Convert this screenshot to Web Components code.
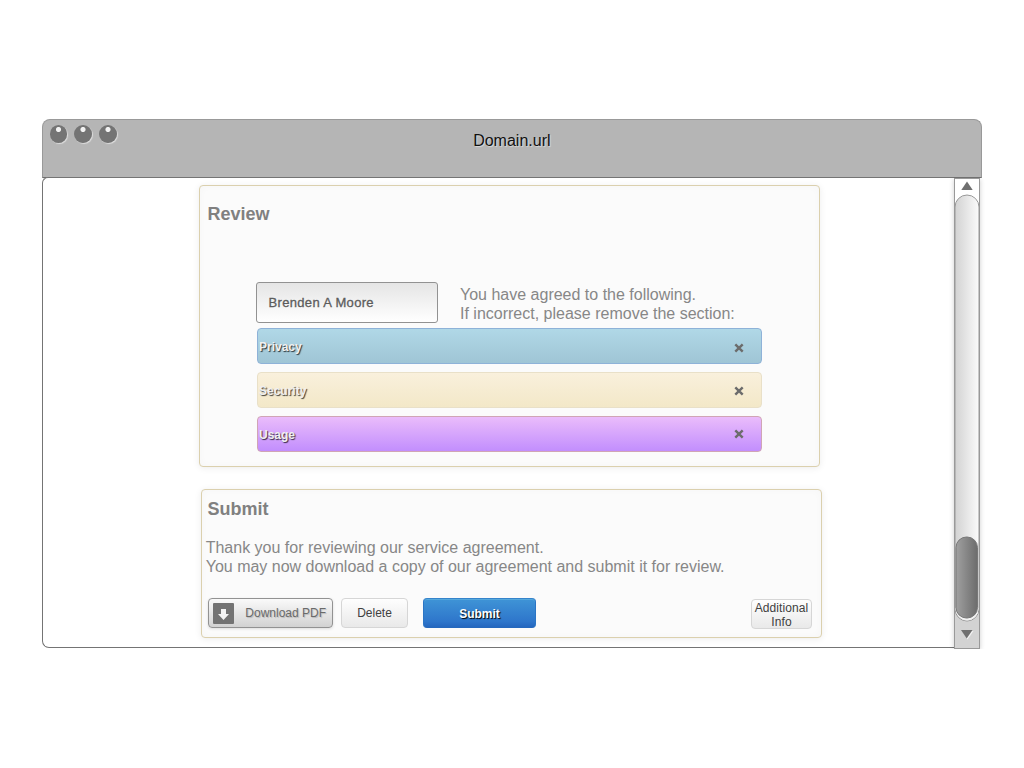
<!DOCTYPE html>
<html lang="en">
<head>
<meta charset="utf-8">
<title>Domain.url</title>
<style>
    body {
        margin: 0;
        background: #fff;
        font-family: "Liberation Sans", Arial, sans-serif;
    }
    .privacy {
        --top: #b0d8e7;
        --bottom: #9fc5d5;
        --edge: #8eb2d8;
    }
    .security {
        --top: #f9f0dc;
        --bottom: #f3e8c8;
        --edge: #e9e0c8;
    }
    .usage {
        --top: #eabcfb;
        --bottom: #c28efd;
        --edge: #d0a5b5;
    }
    .sections {
        display: flex;
        flex-direction: column;
        gap: 8px;
        margin: 5px 57px 0;
    }
    .intro {
        display: flex;
        gap: 22px;
        margin: 57px 0 0 56px;
    }
    .actions {
        display: flex;
        align-items: flex-start;
        margin: 22px 9px 0 6px;
    }
</style>
</head>
<body>
<browser-window address="Domain.url">
    <panel-card heading="Review" style="--height: 282px; --left: 156px; --pad: 17px; --indent: 7.5px">
        <div class="intro">
            <name-field value="Brenden A Moore"></name-field>
            <text-lines style="--offset: 3px">You have agreed to the following.<br>If incorrect, please remove the section:</text-lines>
        </div>
        <div class="sections">
            <section-bar class="privacy" style="--shift: 2px">Privacy</section-bar>
            <section-bar class="security">Security</section-bar>
            <section-bar class="usage" style="--shift: -1px">Usage</section-bar>
        </div>
    </panel-card>
    <panel-card heading="Submit" style="--height: 149px; --left: 158px; --pad: 8px; --indent: 5.5px">
        <text-lines style="margin: 18px 0 0 3.7px">Thank you for reviewing our service agreement.<br>You may now download a copy of our agreement and submit it for review.</text-lines>
        <div class="actions">
            <push-button kind="download" style="width: 125px">Download PDF</push-button>
            <push-button style="width: 67px; margin-left: 8px">Delete</push-button>
            <push-button kind="primary" style="width: 113px; margin-left: 15px">Submit</push-button>
            <push-button style="width: 61px; margin: 1px 0 0 auto; padding-top: 2px; letter-spacing: .1px">Additional<br>Info</push-button>
        </div>
    </panel-card>
</browser-window>

<script>
class BrowserWindow extends HTMLElement {
    constructor() {
        super();
        this.attachShadow({ mode: 'open' });

        this.shadowRoot.innerHTML = `
            <style>
                :host {
                    display: block;
                    width: 940px;
                    margin: 119px 0 0 42px;
                }
                header {
                    box-sizing: border-box;
                    height: 59px;
                    display: grid;
                    grid-template-columns: 1fr auto 1fr;
                    padding: 4.5px 7px 0 6.7px;
                    border: 1px solid #999;
                    border-bottom-color: #707070;
                    border-radius: 8px 8px 0 0;
                    background: #b5b5b5;
                }
                .dots {
                    display: flex;
                    gap: 7px;
                }
                .dots i {
                    width: 17.7px;
                    height: 18px;
                    border-radius: 50%;
                    background: radial-gradient(circle at 50% 25%, #f2f2f2 0 2.1px, #747474 3px);
                    box-shadow: 1px 1px 1px rgba(255, 255, 255, .55);
                }
                .address {
                    padding-top: 6.5px;
                    font-size: 16px;
                    line-height: 19px;
                    color: #111;
                    text-shadow: 1px 1px 1px rgba(255, 255, 255, .5);
                }
                main {
                    display: flex;
                    align-items: flex-start;
                    margin-top: -1px;
                }
                .page {
                    box-sizing: border-box;
                    width: 912px;
                    height: 471px;
                    display: flex;
                    flex-direction: column;
                    gap: 22px;
                    padding-top: 7px;
                    background: #fff;
                    border: 1px solid #747474;
                    border-right: 0;
                    border-radius: 6px 0 0 7px;
                }
            </style>
            <header>
                <div class="dots"><i></i><i></i><i></i></div>
                <div class="address"></div>
            </header>
            <main>
                <div class="page"><slot></slot></div>
                <scroll-bar></scroll-bar>
            </main>
        `;
    }

    connectedCallback() {
        this.shadowRoot.querySelector('.address').textContent = this.getAttribute('address');
    }
}

class ScrollBar extends HTMLElement {
    constructor() {
        super();
        this.attachShadow({ mode: 'open' });

        this.shadowRoot.innerHTML = `
            <style>
                :host {
                    display: block;
                    width: 26px;
                    height: 471px;
                    margin-top: 1px;
                    box-shadow: 0 1px 5px rgba(0, 0, 0, .2);
                    clip-path: inset(0 -6px -6px -6px);
                }
                svg {
                    display: block;
                }
            </style>
            <svg width="26" height="471" viewBox="0 0 26 471">
                <defs>
                    <linearGradient id="track">
                        <stop offset="0" stop-color="#d2d2d2"/>
                        <stop offset="1" stop-color="#fbfbfb"/>
                    </linearGradient>
                    <linearGradient id="thumb">
                        <stop offset="0" stop-color="#a0a0a0"/>
                        <stop offset="1" stop-color="#6c6c6c"/>
                    </linearGradient>
                </defs>
                <rect x=".5" y=".5" width="25" height="470" fill="#fff"/>
                <rect x="1" y="400" width="24" height="70" fill="#d3d3d3"/>
                <rect x="1" y="17" width="24" height="426" rx="12" fill="url(#track)" stroke="#999"/>
                <path d="M2.500 430a10.500 11.500 0 0 0 21 0" fill="none" stroke="#f2f2f2" stroke-width="2"/>
                <rect x="2" y="359" width="21.5" height="81" rx="10.5" fill="url(#thumb)" stroke="#777"/>
                <rect x=".5" y=".5" width="25" height="470" fill="none" stroke="#999"/>
                <path d="M13 3.500L18.700 12H7.300z" fill="#6f6f6f"/>
                <path d="M8 453H19.500L13.500 461.500z" fill="#f2f2f2"/>
                <path d="M7 452H18.500L12.700 460.500z" fill="#707070"/>
            </svg>
        `;
    }
}

class PanelCard extends HTMLElement {
    constructor() {
        super();
        this.attachShadow({ mode: 'open' });

        this.shadowRoot.innerHTML = `
            <style>
                :host {
                    display: block;
                    box-sizing: border-box;
                    width: 621px;
                    height: var(--height);
                    margin-left: var(--left);
                    border: 1px solid #dbd0ae;
                    border-radius: 4px;
                    background: #fbfbfb;
                    box-shadow: 0 1px 7px rgba(0, 0, 0, .08), inset 0 0 8px rgba(0, 0, 0, .025);
                }
                h2 {
                    margin: 0;
                    padding: var(--pad) 0 0 var(--indent);
                    font-size: 18px;
                    line-height: 22px;
                    color: #808080;
                }
            </style>
            <h2></h2>
            <slot></slot>
        `;
    }

    connectedCallback() {
        this.shadowRoot.querySelector('h2').textContent = this.getAttribute('heading');
    }
}

class NameField extends HTMLElement {
    constructor() {
        super();
        this.attachShadow({ mode: 'open' });

        this.shadowRoot.innerHTML = `
            <style>
                :host {
                    display: flex;
                    align-items: center;
                    box-sizing: border-box;
                    width: 182px;
                    height: 41px;
                    padding-left: 11.5px;
                    border: 1px solid #929292;
                    border-radius: 3px;
                    background: linear-gradient(#e5e5e5, #fff);
                    font-size: 13px;
                    letter-spacing: .33px;
                    color: #5c5c5c;
                    -webkit-text-stroke: .3px #5c5c5c;
                }
            </style>
            <span></span>
        `;
    }

    connectedCallback() {
        this.shadowRoot.querySelector('span').textContent = this.getAttribute('value');
    }
}

class TextLines extends HTMLElement {
    constructor() {
        super();
        this.attachShadow({ mode: 'open' });

        this.shadowRoot.innerHTML = `
            <style>
                :host {
                    display: block;
                    padding-top: var(--offset, 0);
                    font-size: 16px;
                    line-height: 19px;
                    white-space: nowrap;
                    color: #878787;
                }
            </style>
            <slot></slot>
        `;
    }
}

class SectionBar extends HTMLElement {
    constructor() {
        super();
        this.attachShadow({ mode: 'open' });

        this.shadowRoot.innerHTML = `
            <style>
                :host {
                    display: flex;
                    align-items: center;
                    justify-content: space-between;
                    box-sizing: border-box;
                    width: 505px;
                    height: 36px;
                    padding: 1px 17px 0 1px;
                    border: 1px solid var(--edge);
                    border-radius: 4px;
                    background: linear-gradient(var(--top), var(--bottom));
                    font-size: 12px;
                    font-weight: bold;
                    color: #f0f0f0;
                    text-shadow: 1px 1px 1px rgba(0, 0, 0, .75);
                }
                svg {
                    margin-top: var(--shift, 0);
                }
            </style>
            <slot></slot>
            <svg width="10" height="10" viewBox="0 0 10 10">
                <path d="M1.300 1.300L8.700 8.700M8.700 1.300L1.300 8.700" stroke="#6c6c6c" stroke-width="2.400"/>
            </svg>
        `;
    }
}

class PushButton extends HTMLElement {
    constructor() {
        super();
        this.attachShadow({ mode: 'open' });

        this.shadowRoot.innerHTML = `
            <style>
                :host {
                    display: flex;
                    align-items: center;
                    justify-content: center;
                    box-sizing: border-box;
                    height: 30px;
                    border: 1px solid #d6d6d6;
                    border-radius: 4px;
                    background: linear-gradient(#fefefe, #e9e9e9);
                    font-size: 12px;
                    line-height: 14px;
                    text-align: center;
                    color: #404040;
                }
                :host([kind="download"]) {
                    justify-content: space-between;
                    padding: 0 6px 0 4px;
                    border-color: #929292;
                    background: linear-gradient(#fafafa, #d2d2d2);
                    box-shadow: 0 1px 3px rgba(0, 0, 0, .12);
                    color: #6a6a6a;
                    text-shadow: 1px 1px 1px rgba(0, 0, 0, .18);
                }
                :host([kind="primary"]) {
                    border-color: #3584cb #2b75c5 #2568bd;
                    background: linear-gradient(#3f94d6, #2e76cb 80%, #2567bf);
                    box-shadow: inset 0 1px 0 #55a8dc;
                    padding-top: 2px;
                    font-weight: bold;
                    color: #fff;
                    text-shadow: 1px 1px 1px #000;
                }
                svg {
                    display: none;
                }
                :host([kind="download"]) svg {
                    display: block;
                }
            </style>
            <svg width="21" height="21" viewBox="0 0 21 21">
                <rect width="21" height="21" rx="1" fill="#737373"/>
                <path d="M8 6H13V11H16L10.500 17L5 11H8z" fill="#f3f3f3"/>
            </svg>
            <span><slot></slot></span>
        `;
    }
}

customElements.define('browser-window', BrowserWindow);
customElements.define('scroll-bar', ScrollBar);
customElements.define('panel-card', PanelCard);
customElements.define('name-field', NameField);
customElements.define('text-lines', TextLines);
customElements.define('section-bar', SectionBar);
customElements.define('push-button', PushButton);
</script>
</body>
</html>
